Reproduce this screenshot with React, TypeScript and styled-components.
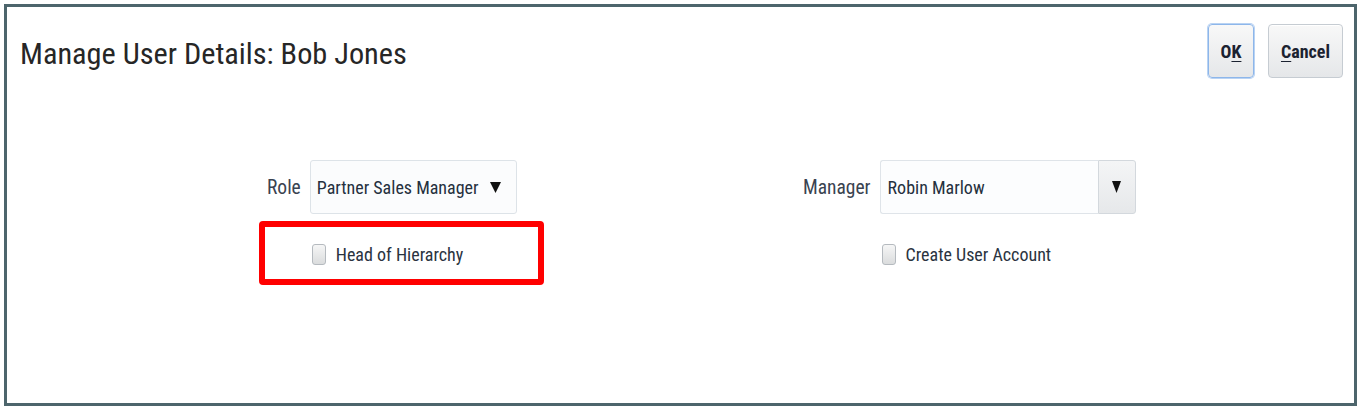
import styled, { createGlobalStyle } from "styled-components";

const GlobalStyle = createGlobalStyle`
  html, body {
    margin: 0;
    padding: 0;
    background: #ffffff;
  }
  body {
    font-family: "Roboto Condensed", "Liberation Sans Narrow", "DejaVu Sans Condensed", "Liberation Sans", sans-serif;
    color: #1f2a36;
  }
  #root {
    padding: 4px 5px 7px 4px;
  }
`;

const Frame = styled.div`
  box-sizing: border-box;
  width: 1353px;
  height: 402px;
  border: 3px solid #4d656c;
  background: #ffffff;
`;

const Header = styled.div`
  display: flex;
  justify-content: space-between;
  align-items: flex-start;
  padding: 17px 11px 0 13px;
`;

const Title = styled.h1`
  margin: 15px 0 0 0;
  font-size: 30.3px;
  font-weight: 400;
  line-height: 1;
  color: #262626;
  white-space: nowrap;
`;

const ButtonBar = styled.div`
  display: flex;
  gap: 14px;
`;

const Button = styled.button<{ $width: number; $primary?: boolean }>`
  box-sizing: border-box;
  width: ${({ $width }) => $width}px;
  height: 54px;
  padding: 0;
  border: 1px solid ${({ $primary }) => ($primary ? "#8db6ea" : "#c6ccd2")};
  border-radius: 4px;
  background: linear-gradient(#f8f8f8, #e5e7e9);
  box-shadow: ${({ $primary }) =>
    $primary ? "0 0 0 1px #b9d3f3" : "inset 0 1px 0 #ffffff"};
  font-family: inherit;
  font-size: 18px;
  font-weight: 700;
  color: #1b2230;
  cursor: pointer;

  u {
    text-underline-offset: 3px;
  }
`;

const FormRow = styled.div`
  display: grid;
  grid-template-columns: 536px 1fr;
  padding-left: 260px;
  margin-top: 82px;
`;

const FieldGroup = styled.div`
  position: relative;
  display: grid;
  grid-template-columns: auto auto;
  justify-content: start;
  align-items: center;
  column-gap: 9px;
  row-gap: 30px;
`;

const Label = styled.label`
  font-size: 19.5px;
  color: #3a4350;
  white-space: nowrap;
`;

const Select = styled.div`
  box-sizing: border-box;
  width: 207px;
  height: 54px;
  display: flex;
  align-items: center;
  justify-content: space-between;
  padding: 0 15px 0 6px;
  border: 1px solid #dde3e8;
  border-radius: 3px;
  background: #fbfcfd;
  font-size: 18px;
  color: #25303d;
  white-space: nowrap;
`;

const Combo = styled.div`
  display: flex;
  width: 256px;
  height: 54px;
`;

const ComboInput = styled.div`
  box-sizing: border-box;
  flex: 1;
  display: flex;
  align-items: center;
  padding-left: 7px;
  border: 1px solid #dfe4e9;
  border-right: none;
  border-radius: 3px 0 0 3px;
  background: #fcfdfe;
  font-size: 18px;
  color: #25303d;
  white-space: nowrap;
`;

const ComboButton = styled.div`
  box-sizing: border-box;
  width: 38px;
  display: flex;
  align-items: center;
  justify-content: center;
  border: 1px solid #d3d8dd;
  border-radius: 0 3px 3px 0;
  background: linear-gradient(#f4f5f6, #e6e8ea);
`;

const CheckRow = styled.div`
  grid-column: 2;
  display: flex;
  align-items: center;
  gap: 10px;
  padding-left: 2px;
  font-size: 18px;
  color: #2a3340;
  white-space: nowrap;
`;

const CheckBox = styled.span`
  box-sizing: border-box;
  width: 14px;
  height: 21px;
  border: 1px solid #b5babf;
  border-radius: 3px;
  background: linear-gradient(#f6f6f6, #dadcdd);
`;

const Highlight = styled.div`
  position: absolute;
  left: -8px;
  top: 61px;
  box-sizing: border-box;
  width: 285px;
  height: 64px;
  border: 6px solid #ff0000;
  border-radius: 4px;
  pointer-events: none;
`;

const Arrow = ({ w = 11, h = 11 }: { w?: number; h?: number }) => (
  <svg width={w} height={h} viewBox="0 0 10 10" preserveAspectRatio="none">
    <polygon points="0,0 10,0 5,10" fill="#111111" />
  </svg>
);

const App = () => {
  return (
    <>
      <GlobalStyle />
      <Frame>
        <Header>
          <Title>Manage User Details: Bob Jones</Title>
          <ButtonBar>
            <Button $width={46} $primary>
              O<u>K</u>
            </Button>
            <Button $width={75}>
              <u>C</u>ancel
            </Button>
          </ButtonBar>
        </Header>
        <FormRow>
          <FieldGroup>
            <Label>Role</Label>
            <Select>
              <span>Partner Sales Manager</span>
              <Arrow />
            </Select>
            <CheckRow>
              <CheckBox />
              <span>Head of Hierarchy</span>
            </CheckRow>
            <Highlight />
          </FieldGroup>
          <FieldGroup>
            <Label>Manager</Label>
            <Combo>
              <ComboInput>Robin Marlow</ComboInput>
              <ComboButton>
                <Arrow w={9} h={12} />
              </ComboButton>
            </Combo>
            <CheckRow>
              <CheckBox />
              <span>Create User Account</span>
            </CheckRow>
          </FieldGroup>
        </FormRow>
      </Frame>
    </>
  );
};

export default App;
